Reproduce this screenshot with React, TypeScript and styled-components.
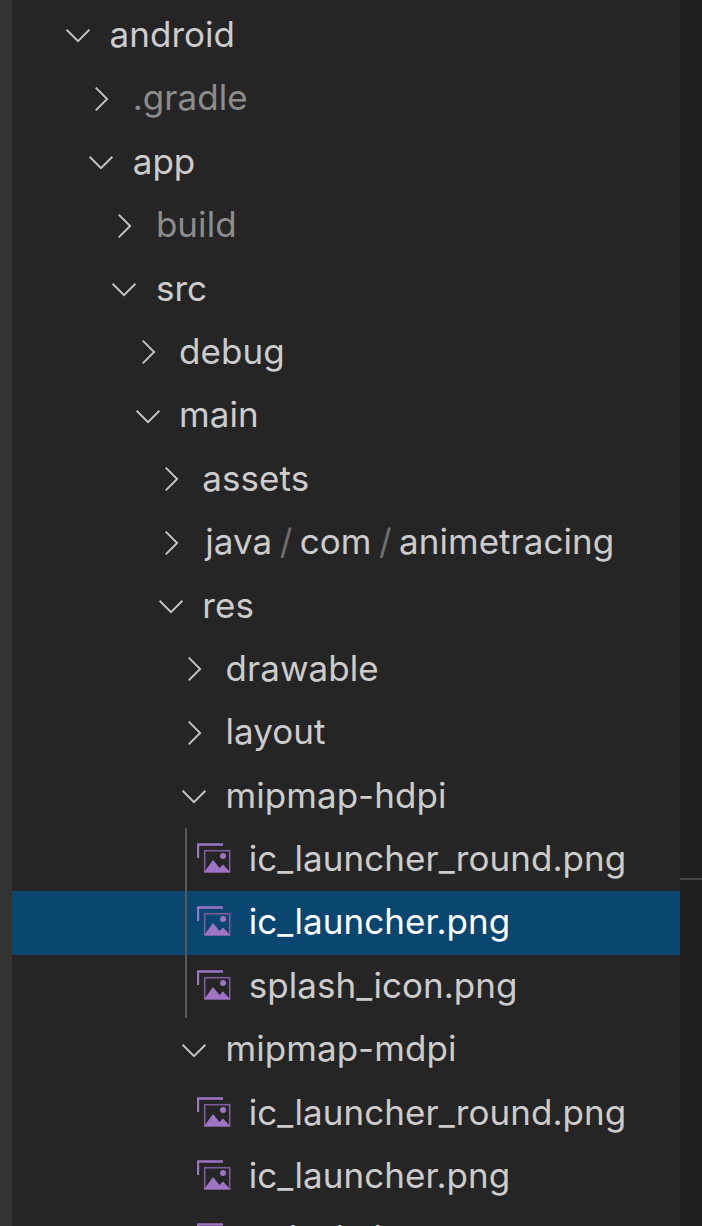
import React from "react";
import styled, { createGlobalStyle } from "styled-components";

type Entry = {
  name: React.ReactNode;
  depth: number;
  kind: "open" | "closed" | "image";
  ignored?: boolean;
  selected?: boolean;
};

const INDENT = 23.2;

const GlobalStyle = createGlobalStyle`
  html, body {
    margin: 0;
    padding: 0;
    background: #1e1e1e;
  }
`;

const Window = styled.div`
  display: flex;
  width: 702px;
  height: 1226px;
  overflow: hidden;
  font-family: Inter, "Noto Sans", sans-serif;
`;

const ActivityEdge = styled.div`
  width: 12px;
  flex: none;
  background: #333333;
`;

const Sidebar = styled.div`
  width: 668px;
  flex: none;
  padding-top: 3.8px;
  background: #252526;
`;

const EditorGutter = styled.div`
  flex: 1;
  padding-top: 878px;
  background: #1e1e1e;
`;

const SashLine = styled.div`
  height: 2px;
  background: #444444;
`;

const Row = styled.div<{ $depth: number; $selected?: boolean }>`
  display: flex;
  align-items: center;
  height: 63.4px;
  box-sizing: border-box;
  padding-left: ${(p) => 97.5 + p.$depth * INDENT}px;
  background: ${(p) => (p.$selected ? "#094771" : "transparent")};
`;

const Twistie = styled.div`
  width: 0;
  display: flex;
  align-items: center;
  justify-content: center;
  margin-left: -31.5px;
  margin-right: 31.5px;
`;

const ChevronSvg = styled.svg`
  flex: none;
  width: 28px;
  height: 28px;
  fill: none;
  stroke: #c5c5c5;
  stroke-width: 2.2;
`;

const IconSlot = styled.div`
  flex: none;
  display: flex;
  width: 34px;
  height: 30px;
  margin: 0 18px 3px -52px;
`;

const Label = styled.span<{ $ignored?: boolean; $selected?: boolean }>`
  font-size: 35px;
  line-height: 1;
  padding-bottom: 2px;
  white-space: nowrap;
  letter-spacing: 0.05px;
  color: ${(p) =>
    p.$selected ? "#ffffff" : p.$ignored ? "#8c8c8c" : "#cccccc"};
`;

const JavaPath = styled.span`
  margin-left: 3px;
  word-spacing: -2.5px;
`;

const Slash = styled.span`
  color: #6f6f6f;
`;

const GuidedGroup = styled.div`
  position: relative;

  &::before {
    content: "";
    position: absolute;
    left: 173px;
    top: 0;
    bottom: 0;
    width: 2px;
    background: #585858;
  }
`;

const Chevron = ({ open }: { open: boolean }) => (
  <ChevronSvg viewBox="0 0 32 32">
    {open ? (
      <polyline points="3,10 16,23 29,10" />
    ) : (
      <polyline points="10,3 23,16 10,29" />
    )}
  </ChevronSvg>
);

const ImageIcon = () => (
  <svg width="34" height="30" viewBox="0 0 34 30">
    <path d="M1 15V1.5h25" fill="none" stroke="#a074c4" strokeWidth="2.4" />
    <rect x="7.7" y="7.7" width="25" height="21" fill="none" stroke="#7d5c9c" strokeWidth="1.6" />
    <circle cx="26" cy="13" r="3" fill="#a074c4" />
    <path d="M7 29.5 L16 17 L22.5 25 L26 21.5 L33.5 29.5 Z" fill="#a074c4" />
  </svg>
);

const Sep = () => <Slash>/</Slash>;

const hdpi: Entry[] = [
  { name: "ic_launcher_round.png", depth: 6, kind: "image" },
  { name: "ic_launcher.png", depth: 6, kind: "image", selected: true },
  { name: "splash_icon.png", depth: 6, kind: "image" },
];

const before: Entry[] = [
  { name: "android", depth: 0, kind: "open" },
  { name: ".gradle", depth: 1, kind: "closed", ignored: true },
  { name: "app", depth: 1, kind: "open" },
  { name: "build", depth: 2, kind: "closed", ignored: true },
  { name: "src", depth: 2, kind: "open" },
  { name: "debug", depth: 3, kind: "closed" },
  { name: "main", depth: 3, kind: "open" },
  { name: "assets", depth: 4, kind: "closed" },
  {
    name: (
      <JavaPath>
        java <Sep /> com <Sep /> animetracing
      </JavaPath>
    ),
    depth: 4,
    kind: "closed",
  },
  { name: "res", depth: 4, kind: "open" },
  { name: "drawable", depth: 5, kind: "closed" },
  { name: "layout", depth: 5, kind: "closed" },
  { name: "mipmap-hdpi", depth: 5, kind: "open" },
];

const after: Entry[] = [
  { name: "mipmap-mdpi", depth: 5, kind: "open" },
  { name: "ic_launcher_round.png", depth: 6, kind: "image" },
  { name: "ic_launcher.png", depth: 6, kind: "image" },
  { name: "splash_icon.png", depth: 6, kind: "image" },
];

const TreeRow = ({ entry }: { entry: Entry }) => (
  <Row $depth={entry.depth} $selected={entry.selected}>
    {entry.kind === "image" ? (
      <IconSlot>
        <ImageIcon />
      </IconSlot>
    ) : (
      <Twistie>
        <Chevron open={entry.kind === "open"} />
      </Twistie>
    )}
    <Label $ignored={entry.ignored} $selected={entry.selected}>
      {entry.name}
    </Label>
  </Row>
);

export default function App() {
  return (
    <Window>
      <GlobalStyle />
      <ActivityEdge />
      <Sidebar>
        {before.map((e, i) => (
          <TreeRow entry={e} key={i} />
        ))}
        <GuidedGroup>
          {hdpi.map((e, i) => (
            <TreeRow entry={e} key={i} />
          ))}
        </GuidedGroup>
        {after.map((e, i) => (
          <TreeRow entry={e} key={i} />
        ))}
      </Sidebar>
      <EditorGutter>
        <SashLine />
      </EditorGutter>
    </Window>
  );
}
